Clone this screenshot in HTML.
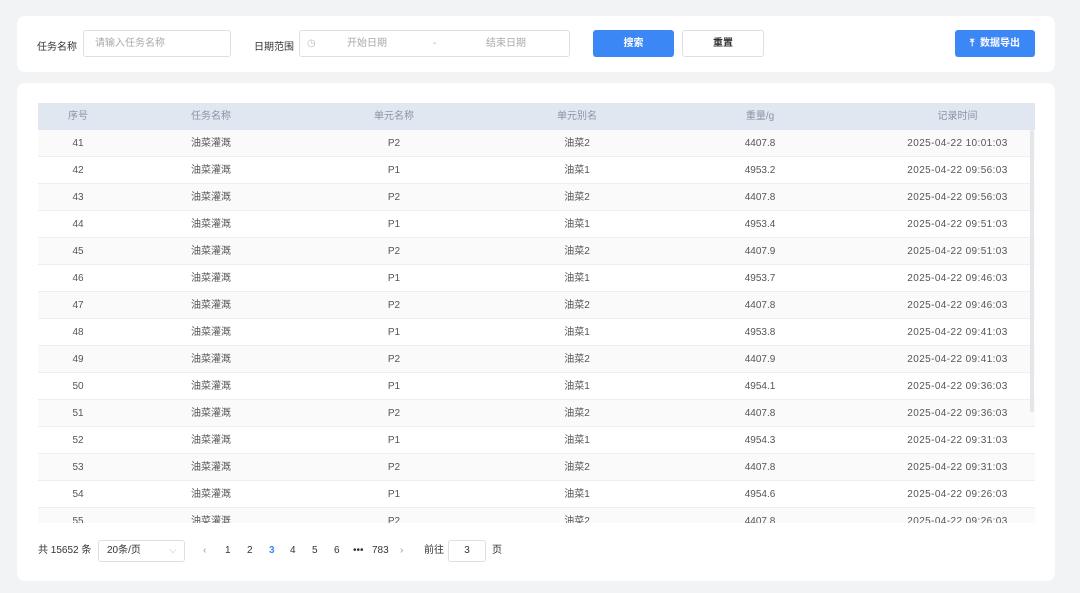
<!DOCTYPE html><html><head><meta charset="utf-8"><style>
*{box-sizing:border-box;margin:0;padding:0}
body{width:1080px;height:593px;background:#f2f3f5;font-family:"Liberation Sans","Noto Sans CJK SC",sans-serif;font-size:10px;color:#555;position:relative;overflow:hidden}
.card{position:absolute;left:17px;width:1038px;background:#fff;border-radius:8px}
.a{position:absolute}
.inp{position:absolute;border:1px solid #dcdfe6;border-radius:3px;background:#fff;height:27px;line-height:26px;color:#aaa}
.btn{position:absolute;height:27px;line-height:27px;text-align:center;border-radius:3px;font-weight:bold}
.row{position:absolute;left:38px;width:997px;height:27px;display:flex;line-height:28px;border-bottom:1px solid #ebeef5}
.row div{text-align:center;color:#555}
.c1{width:80px}.c2{width:186px}.c3{width:180px}.c4{width:186px}.c5{width:180px}.c6{width:185px;padding-left:30px;letter-spacing:0.4px}
.hd{background:#e1e7f0}.hd div{color:#8a94a6;letter-spacing:0}
.pg{position:absolute;top:540px;height:22px;line-height:22px;color:#333}
</style></head><body>
<div class="card" style="top:16px;height:56px"></div>
<div class="card" style="top:83px;height:498px"></div>
<div class="a" style="left:37px;top:38px;color:#333">任务名称</div>
<div class="inp" style="left:83px;top:30px;width:148px;padding-left:11px">请输入任务名称</div>
<div class="a" style="left:254px;top:38px;color:#333">日期范围</div>
<div class="inp" style="left:299px;top:30px;width:271px">
<span class="a" style="left:7px;top:0;color:#bbb">◷</span>
<span class="a" style="left:47px">开始日期</span><span class="a" style="left:133px">-</span><span class="a" style="left:186px">结束日期</span></div>
<div class="btn" style="left:593px;top:30px;width:81px;background:#3c87f6;color:#fff">搜索</div>
<div class="btn" style="left:682px;top:30px;width:82px;border:1px solid #dcdfe6;line-height:25px;color:#333">重置</div>
<div class="btn" style="left:955px;top:30px;width:80px;background:#3c87f6;color:#fff">⤒&nbsp; 数据导出</div>
<div class="row hd" style="top:103px;border:none"><div class="c1">序号</div><div class="c2">任务名称</div><div class="c3">单元名称</div><div class="c4">单元别名</div><div class="c5">重量/g</div><div class="c6">记录时间</div></div>
<div class="a" style="left:38px;top:130px;width:997px;height:393px;overflow:hidden">
<div id="rows"></div></div>
<div class="a" style="left:1030px;top:130px;width:4px;height:282px;background:#e4e6ea;border-radius:2px"></div>
<script>
var d=[[41,2,'4407.8','10:01:03'],[42,1,'4953.2','09:56:03'],[43,2,'4407.8','09:56:03'],[44,1,'4953.4','09:51:03'],[45,2,'4407.9','09:51:03'],[46,1,'4953.7','09:46:03'],[47,2,'4407.8','09:46:03'],[48,1,'4953.8','09:41:03'],[49,2,'4407.9','09:41:03'],[50,1,'4954.1','09:36:03'],[51,2,'4407.8','09:36:03'],[52,1,'4954.3','09:31:03'],[53,2,'4407.8','09:31:03'],[54,1,'4954.6','09:26:03'],[55,2,'4407.8','09:26:03']];
var h='';d.forEach(function(r,i){h+='<div class="row" style="left:0;top:'+(i*27)+'px;background:'+(i%2?'#fff':'#fafafa')+'"><div class="c1">'+r[0]+'</div><div class="c2">油菜灌溉</div><div class="c3">P'+r[1]+'</div><div class="c4">油菜'+r[1]+'</div><div class="c5">'+r[2]+'</div><div class="c6">2025-04-22 '+r[3]+'</div></div>'});
document.getElementById('rows').innerHTML=h;
</script>
<div class="pg" style="left:38px">共 15652 条</div>
<div class="inp" style="left:98px;top:540px;width:87px;height:22px;line-height:20px;color:#333;padding-left:8px">20条/页<span class="a" style="left:70px;color:#bbb">⌵</span></div>
<div class="pg" style="left:203px;color:#999">‹</div>
<div class="pg" style="left:225px">1</div><div class="pg" style="left:247px">2</div><div class="pg" style="left:269px;color:#3c87f6;font-weight:bold">3</div><div class="pg" style="left:290px">4</div><div class="pg" style="left:312px">5</div><div class="pg" style="left:334px">6</div><div class="pg" style="left:353px">•••</div><div class="pg" style="left:372px">783</div><div class="pg" style="left:400px;color:#999">›</div>
<div class="pg" style="left:424px">前往</div>
<div class="inp" style="left:448px;top:540px;width:38px;height:22px;line-height:20px;color:#333;text-align:center">3</div>
<div class="pg" style="left:492px">页</div>
</body></html>
